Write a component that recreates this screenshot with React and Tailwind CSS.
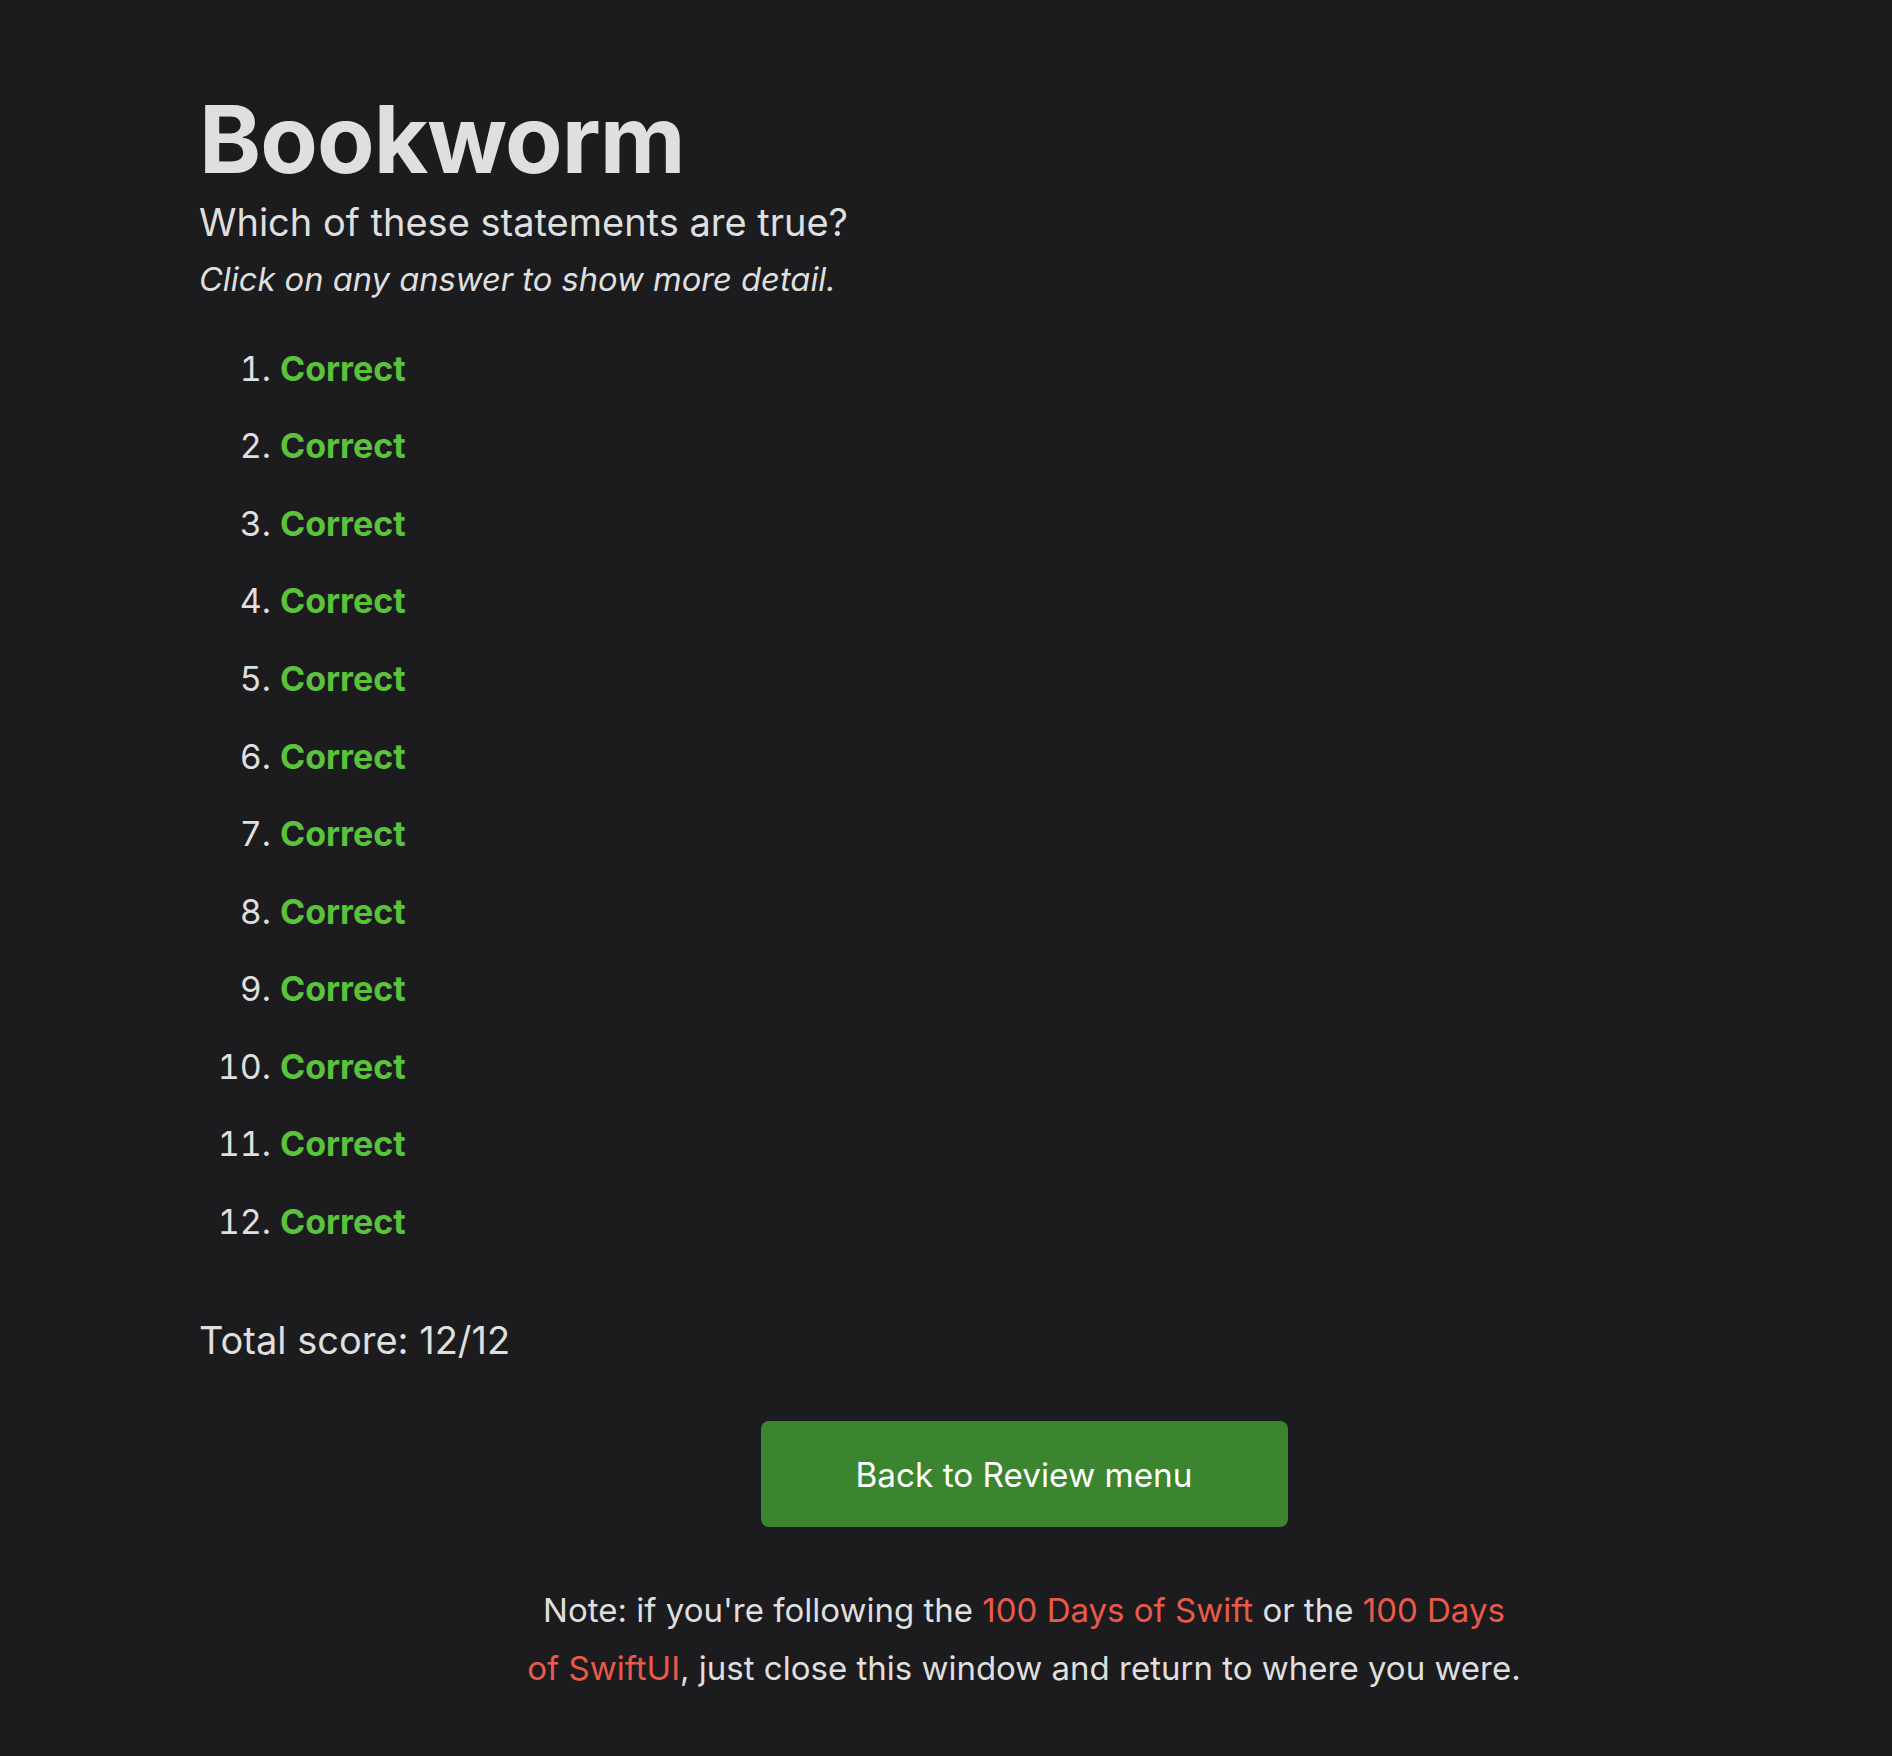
import React from 'react';

const answers = Array.from({ length: 12 }, (_, i) => ({ n: i + 1, label: 'Correct' }));

export default function App() {
  return (
    <div
      className="min-h-[1756px] w-full bg-[#1c1c1e] text-[#dfdfdf]"
      style={{ fontFamily: 'Inter, "Noto Sans", sans-serif' }}
    >
      <div className="w-[1849px] pl-[199px] pt-[92px]">
        <h1 className="text-[94px] font-bold leading-none tracking-[-0.01em]">Bookworm</h1>
        <p className="mt-[14px] text-[38px] leading-[1.2]">Which of these statements are true?</p>
        <p className="mt-[14px] text-[32.7px] italic leading-[1.2]">Click on any answer to show more detail.</p>

        {/* Answers */}
        <ol className="mt-[31px] list-decimal pl-[81px] text-[34px] leading-[77.55px]">
          {answers.map((a) => (
            <li key={a.n} className="marker:text-[#dfdfdf]">
              <span className="cursor-pointer font-bold text-[#5bc33b]">{a.label}</span>
            </li>
          ))}
        </ol>

        <p className="mt-[58px] text-[38px] leading-[1.2]">Total score: 12/12</p>

        <div className="flex flex-col items-center">
          <button className="mt-[57px] flex h-[106px] w-[527px] items-center justify-center rounded-[8px] bg-[#3b8530] pt-[3px] text-[33.3px] text-white">
            Back to Review menu
          </button>

          <p className="mt-[54px] w-[1000px] text-center text-[33px] leading-[58px]">
            Note: if you're following the <a className="text-[#ea5a4a]" href="#">100 Days of Swift</a> or the{' '}
            <a className="text-[#ea5a4a]" href="#">100 Days of SwiftUI</a>, just close this window and return to where you were.
          </p>
        </div>
      </div>
    </div>
  );
}
